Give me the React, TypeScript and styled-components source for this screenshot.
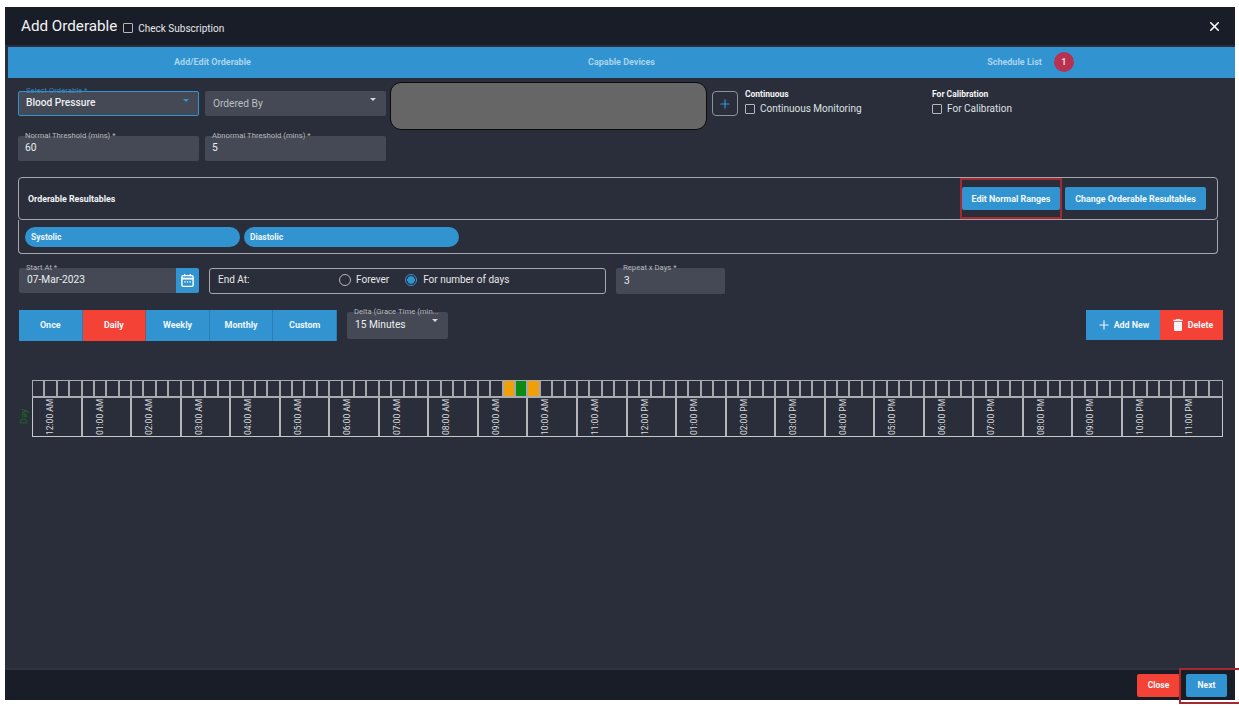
import React from 'react';
import styled, { createGlobalStyle } from 'styled-components';
import { Plus, X } from 'lucide-react';
import { MdDelete } from 'react-icons/md';

const HOURS = [
  '12:00 AM', '01:00 AM', '02:00 AM', '03:00 AM', '04:00 AM', '05:00 AM',
  '06:00 AM', '07:00 AM', '08:00 AM', '09:00 AM', '10:00 AM', '11:00 AM',
  '12:00 PM', '01:00 PM', '02:00 PM', '03:00 PM', '04:00 PM', '05:00 PM',
  '06:00 PM', '07:00 PM', '08:00 PM', '09:00 PM', '10:00 PM', '11:00 PM',
];

const FREQUENCIES = ['Once', 'Daily', 'Weekly', 'Monthly', 'Custom'];

const slotColor = (index: number) => {
  if (index === 38 || index === 40) return '#ee9f0a';
  if (index === 39) return '#0a8a12';
  return 'transparent';
};

const CalendarIcon = () => (
  <svg width="15" height="15" viewBox="0 0 16 16" fill="none" stroke="#fff" strokeWidth="1.5">
    <rect x="2" y="2.75" width="12" height="11.5" rx="1.5" />
    <path d="M2 6h12" strokeWidth="2" />
    <path d="M5 1v2.5M11 1v2.5" />
    <path d="M4.5 9.5h1.5M7.25 9.5h1.5M10 9.5h1.5" />
  </svg>
);

export default function App() {
  return (
    <>
      <GlobalStyle />
      <Modal>
        <Header>
          <Title>Add Orderable</Title>
          <HeaderCheck>
            <CheckBox />
            Check Subscription
          </HeaderCheck>
          <CloseIcon>
            <X size={15} strokeWidth={2.5} />
          </CloseIcon>
        </Header>

        <Tabs>
          <Tab>Add/Edit Orderable</Tab>
          <Tab>Capable Devices</Tab>
          <Tab>
            Schedule List
            <Badge>1</Badge>
          </Tab>
        </Tabs>

        <Body>
          <LeadRow>
            <Field $active>
              <FloatLabel $active>Select Orderable *</FloatLabel>
              <FieldValue $bold>Blood Pressure</FieldValue>
              <Caret $active />
            </Field>
            <Field>
              <Placeholder>Ordered By</Placeholder>
              <Caret />
            </Field>
            <Redaction />
            <PlusButton>
              <Plus size={14} strokeWidth={2} color="#2f96d6" />
            </PlusButton>
            <CheckGroup $width={187}>
              <GroupTitle>Continuous</GroupTitle>
              <CheckLine>
                <CheckBox />
                Continuous Monitoring
              </CheckLine>
            </CheckGroup>
            <CheckGroup $width={120}>
              <GroupTitle>For Calibration</GroupTitle>
              <CheckLine>
                <CheckBox />
                For Calibration
              </CheckLine>
            </CheckGroup>
          </LeadRow>

          <ThresholdRow>
            <Field>
              <FloatLabel>Normal Threshold (mins) *</FloatLabel>
              <FieldValue>60</FieldValue>
            </Field>
            <Field>
              <FloatLabel>Abnormal Threshold (mins) *</FloatLabel>
              <FieldValue>5</FieldValue>
            </Field>
          </ThresholdRow>

          <ResultablesHead>
            <SectionTitle>Orderable Resultables</SectionTitle>
            <HeadActions>
              <Marked>
                <SmallButton $width={98}>Edit Normal Ranges</SmallButton>
              </Marked>
              <SmallButton $width={141}>Change Orderable Resultables</SmallButton>
            </HeadActions>
          </ResultablesHead>
          <ResultablesBody>
            <Chip>Systolic</Chip>
            <Chip>Diastolic</Chip>
          </ResultablesBody>

          <DateRow>
            <DateField>
              <FloatLabel>Start At *</FloatLabel>
              <FieldValue>07-Mar-2023</FieldValue>
              <CalendarButton>
                <CalendarIcon />
              </CalendarButton>
            </DateField>
            <EndBox>
              <EndLabel>End At:</EndLabel>
              <RadioLine $left={89} $gap={5}>
                <Radio />
                Forever
              </RadioLine>
              <RadioLine $left={16} $gap={6}>
                <Radio $checked />
                For number of days
              </RadioLine>
            </EndBox>
            <RepeatField>
              <FloatLabel>Repeat x Days *</FloatLabel>
              <FieldValue>3</FieldValue>
            </RepeatField>
          </DateRow>

          <ScheduleRow>
            <Frequency>
              {FREQUENCIES.map((name) => (
                <FrequencyItem key={name} $selected={name === 'Daily'}>
                  {name}
                </FrequencyItem>
              ))}
            </Frequency>
            <DeltaField>
              <FloatLabel>Delta (Grace Time (min...</FloatLabel>
              <FieldValue>15 Minutes</FieldValue>
              <Caret />
            </DeltaField>
            <ScheduleActions>
              <AddButton>
                <Plus size={14} strokeWidth={2} />
                Add New
              </AddButton>
              <DeleteButton>
                <MdDelete size={16} />
                Delete
              </DeleteButton>
            </ScheduleActions>
          </ScheduleRow>

          <Timeline>
            <DayLabel>Day</DayLabel>
            <TimelineGrid>
              <Slots>
                {Array.from({ length: 96 }, (_, index) => (
                  <Slot key={index} $color={slotColor(index)} />
                ))}
              </Slots>
              <Hours>
                {HOURS.map((hour) => (
                  <Hour key={hour}>
                    <HourText>{hour}</HourText>
                  </Hour>
                ))}
              </Hours>
            </TimelineGrid>
          </Timeline>
        </Body>

        <Footer>
          <FooterButton $color="#f44336" $width={43}>Close</FooterButton>
          <NextMark>
            <FooterButton $color="#3194d0" $width={41}>Next</FooterButton>
          </NextMark>
        </Footer>
      </Modal>
    </>
  );
}

/* ─── STYLED COMPONENTS ─── */
const GlobalStyle = createGlobalStyle`
  html, body {
    margin: 0;
    padding: 0;
    background: #fff;
  }
  body {
    min-height: 708px;
    font-family: Roboto, 'Liberation Sans', sans-serif;
  }
  * {
    box-sizing: border-box;
  }
`;

const Modal = styled.div`
  width: 1230px;
  height: 693px;
  margin: 7px 0 0 5px;
  display: flex;
  flex-direction: column;
  background: #2a2e3a;
  color: #e6e8eb;
`;

const Header = styled.header`
  height: 40px;
  flex: none;
  display: flex;
  align-items: center;
  padding: 0 13px 0 16px;
  background: #191d28;
  border-bottom: 2px solid #2a2e3a;
`;

const Title = styled.h1`
  margin: 0;
  font-size: 15.2px;
  font-weight: 400;
  color: #f2f3f5;
`;

const HeaderCheck = styled.label`
  margin-left: 6px;
  margin-top: 4px;
  display: flex;
  align-items: center;
  gap: 5px;
  font-size: 10px;
`;

const CloseIcon = styled.span`
  margin-left: auto;
  display: flex;
  color: #fff;
`;

const Tabs = styled.nav`
  height: 31px;
  flex: none;
  margin-left: 3px;
  display: grid;
  grid-template-columns: repeat(3, 1fr);
  background: #3194d0;
`;

const Tab = styled.div`
  display: flex;
  align-items: center;
  justify-content: center;
  gap: 12px;
  padding-bottom: 1px;
  font-size: 9px;
  font-weight: 700;
  color: #a9d4ef;
`;

const Badge = styled.span`
  width: 20px;
  height: 20px;
  border-radius: 50%;
  display: flex;
  align-items: center;
  justify-content: center;
  background: #b8314f;
  color: #f5d5dc;
  font-size: 9px;
`;

const Body = styled.main`
  flex: 1;
  padding: 4px 0 0 13px;
`;

const LeadRow = styled.div`
  height: 47px;
  display: flex;
  align-items: flex-start;
`;

const Field = styled.div<{ $active?: boolean }>`
  position: relative;
  width: 181px;
  height: 25px;
  flex: none;
  margin-top: 9px;
  margin-right: 6px;
  display: flex;
  align-items: center;
  padding: 0 7px 2px;
  background: #444955;
  border-radius: 2px;
  border: ${(p) => (p.$active ? '1px solid #3194d0' : 'none')};
`;

const FloatLabel = styled.span<{ $active?: boolean }>`
  position: absolute;
  top: ${(p) => (p.$active ? '-6px' : '-5px')};
  left: 7px;
  padding-right: 2px;
  font-size: 7.7px;
  line-height: 10px;
  white-space: nowrap;
  color: ${(p) => (p.$active ? '#3c83b4' : '#b4b7bd')};
  background: ${(p) =>
    p.$active ? 'linear-gradient(#2a2e3a 50%, transparent 50%)' : 'none'};
`;

const FieldValue = styled.span<{ $bold?: boolean }>`
  font-size: 10.2px;
  font-weight: ${(p) => (p.$bold ? 500 : 400)};
  color: #eceef0;
`;

const Placeholder = styled.span`
  font-size: 10.2px;
  padding: 2px 0 0 1px;
  color: #bcbfc5;
`;

const Caret = styled.span<{ $active?: boolean }>`
  position: absolute;
  top: 7px;
  right: ${(p) => (p.$active ? '9px' : '10px')};
  border-left: 3px solid transparent;
  border-right: 3px solid transparent;
  border-top: 3px solid ${(p) => (p.$active ? '#3194d0' : '#d5d7da')};
`;

const Redaction = styled.div`
  width: 317px;
  height: 48px;
  flex: none;
  margin-left: -2px;
  background: #666;
  border: 1.5px solid #0b0b0d;
  border-radius: 11px;
`;

const PlusButton = styled.button`
  width: 26px;
  height: 25px;
  flex: none;
  margin: 9px 7px 0 5px;
  padding: 0;
  display: flex;
  align-items: center;
  justify-content: center;
  background: transparent;
  border: 1px solid #8e9198;
  border-radius: 4px;
`;

const CheckGroup = styled.div<{ $width: number }>`
  width: ${(p) => p.$width}px;
  flex: none;
  padding-top: 7px;
`;

const GroupTitle = styled.div`
  font-size: 8.5px;
  font-weight: 700;
  line-height: 11px;
  color: #f2f3f5;
`;

const CheckLine = styled.label`
  margin-top: 3px;
  display: flex;
  align-items: center;
  gap: 5px;
  font-size: 10px;
  color: #dfe1e4;
`;

const CheckBox = styled.span`
  width: 10px;
  height: 10px;
  flex: none;
  border: 1px solid #b4b6ba;
  border-radius: 1px;
`;

const ThresholdRow = styled.div`
  display: flex;
  margin-top: -2px;
`;

const ResultablesHead = styled.section`
  width: 1200px;
  height: 43px;
  margin-top: 16px;
  display: flex;
  align-items: center;
  justify-content: space-between;
  padding: 0 11px 0 9px;
  border: 1px solid #a6a8ad;
  border-radius: 4px;
`;

const SectionTitle = styled.h2`
  margin: 0;
  font-size: 8.8px;
  font-weight: 700;
  color: #f2f3f5;
`;

const HeadActions = styled.div`
  display: flex;
  gap: 5px;
`;

const Marked = styled.div`
  position: relative;
  display: flex;

  &::after {
    content: '';
    position: absolute;
    top: -9px;
    bottom: -9px;
    left: -2px;
    right: -2px;
    border: 2px solid #a52a30;
  }
`;

const SmallButton = styled.button<{ $width: number }>`
  width: ${(p) => p.$width}px;
  height: 23px;
  padding: 0;
  border: none;
  border-radius: 2px;
  background: #3194d0;
  color: #f4f8fb;
  font-family: inherit;
  font-size: 8.9px;
  font-weight: 700;
`;

const ResultablesBody = styled.section`
  width: 1200px;
  height: 34px;
  display: flex;
  gap: 4.5px;
  padding: 7px 0 0 6px;
  border: 1px solid #a6a8ad;
  border-top: none;
  border-radius: 0 0 4px 4px;
`;

const Chip = styled.div`
  width: 214.5px;
  height: 20px;
  display: flex;
  align-items: center;
  padding-left: 6px;
  border-radius: 10px;
  background: #3194d0;
  color: #eef6fb;
  font-size: 8.5px;
  font-weight: 700;
`;

const DateRow = styled.div`
  height: 26px;
  margin-top: 14px;
  padding-left: 1px;
  display: flex;
  gap: 10px;
`;

const DateField = styled(Field)`
  width: 180px;
  margin: 0;
  padding-left: 8px;
`;

const CalendarButton = styled.span`
  position: absolute;
  top: 0;
  right: 0;
  bottom: 0;
  width: 23px;
  display: flex;
  align-items: center;
  justify-content: center;
  background: #3194d0;
  border-radius: 0 2px 2px 0;
`;

const EndBox = styled.div`
  width: 397px;
  display: flex;
  align-items: center;
  padding: 0 0 3px 8px;
  font-size: 10px;
  border: 1px solid #a6a8ad;
  border-radius: 3px;
`;

const EndLabel = styled.span`
  width: 32px;
  flex: none;
  white-space: nowrap;
`;

const RadioLine = styled.label<{ $left: number; $gap: number }>`
  margin-left: ${(p) => p.$left}px;
  display: flex;
  align-items: center;
  gap: ${(p) => p.$gap}px;
  white-space: nowrap;
`;

const Radio = styled.span<{ $checked?: boolean }>`
  width: 12px;
  height: 12px;
  flex: none;
  border-radius: 50%;
  border: 1px solid ${(p) => (p.$checked ? '#3194d0' : '#b4b6ba')};
  background: ${(p) =>
    p.$checked ? 'radial-gradient(circle, #3194d0 0 3.5px, transparent 4px)' : 'none'};
`;

const RepeatField = styled(Field)`
  width: 109px;
  height: 26px;
  margin: 0;
  padding-left: 8px;
`;

const ScheduleRow = styled.div`
  height: 31px;
  margin-top: 16px;
  padding-left: 1px;
  display: flex;
  align-items: flex-start;
`;

const Frequency = styled.div`
  width: 318px;
  height: 31px;
  display: grid;
  grid-template-columns: repeat(5, 1fr);
`;

const FrequencyItem = styled.div<{ $selected?: boolean }>`
  display: flex;
  align-items: center;
  justify-content: center;
  padding-bottom: 1px;
  background: ${(p) => (p.$selected ? '#f44336' : '#3194d0')};
  border-right: 1px solid rgba(24, 90, 130, 0.35);
  color: #eef6fb;
  font-size: 9px;
  font-weight: 700;
`;

const DeltaField = styled(Field)`
  width: 101px;
  height: 27px;
  margin: 2px 0 0 10px;
  padding: 0 7px 3px 8px;
`;

const ScheduleActions = styled.div`
  margin-left: auto;
  margin-right: 12px;
  display: flex;
`;

const AddButton = styled.button`
  width: 74px;
  height: 30px;
  padding: 0;
  display: flex;
  align-items: center;
  justify-content: center;
  gap: 3px;
  border: none;
  background: #3194d0;
  color: #eef6fb;
  font-family: inherit;
  font-size: 8.9px;
  font-weight: 700;
`;

const DeleteButton = styled(AddButton)`
  width: 63px;
  gap: 2px;
  background: #f44336;
`;

const Timeline = styled.div`
  width: 1205px;
  margin-top: 39px;
  display: flex;
  align-items: flex-end;
`;

const DayLabel = styled.span`
  width: 14px;
  height: 40px;
  flex: none;
  display: flex;
  align-items: center;
  justify-content: center;
  padding-left: 2px;
  writing-mode: vertical-rl;
  transform: rotate(180deg);
  font-size: 9px;
  color: #176e1c;
`;

const TimelineGrid = styled.div`
  flex: 1;
  min-width: 0;
`;

const Slots = styled.div`
  height: 18px;
  display: grid;
  grid-template-columns: repeat(96, 1fr);
  border: 1px solid #a9abb0;
  border-bottom: 2px solid #a9abb0;
`;

const Slot = styled.div<{ $color: string }>`
  background: ${(p) => p.$color};
  border-right: 2px solid #a4a6ab;

  &:last-child {
    border-right: none;
  }
`;

const Hours = styled.div`
  height: 39px;
  display: grid;
  grid-template-columns: repeat(24, 1fr);
  border: 1px solid #c6c8cc;
  border-top: none;
`;

const Hour = styled.div`
  display: flex;
  justify-content: flex-start;
  padding: 1px 0 0 12px;
  border-right: 2px solid #b4b6ba;

  &:last-child {
    border-right: none;
  }
`;

const HourText = styled.span`
  writing-mode: vertical-rl;
  transform: rotate(180deg);
  height: 36px;
  font-size: 8.5px;
  line-height: 10px;
  white-space: nowrap;
  text-align: left;
  color: #d9dbde;
`;

const Footer = styled.footer`
  height: 32px;
  flex: none;
  display: flex;
  align-items: center;
  justify-content: flex-end;
  gap: 6px;
  padding: 0 8px 0 0;
  background: #191d28;
  border-top: 2px solid #2f3340;
`;

const FooterButton = styled.button<{ $color: string; $width: number }>`
  width: ${(p) => p.$width}px;
  height: 23px;
  padding: 0;
  border: none;
  border-radius: 2px;
  background: ${(p) => p.$color};
  color: #f6f7f8;
  font-family: inherit;
  font-size: 8.5px;
  font-weight: 700;
`;

const NextMark = styled.div`
  position: relative;
  display: flex;

  &::after {
    content: '';
    position: absolute;
    top: -6px;
    bottom: -7px;
    left: -7px;
    right: -12px;
    border: 2px solid #a52a30;
    border-right: none;
  }
`;
